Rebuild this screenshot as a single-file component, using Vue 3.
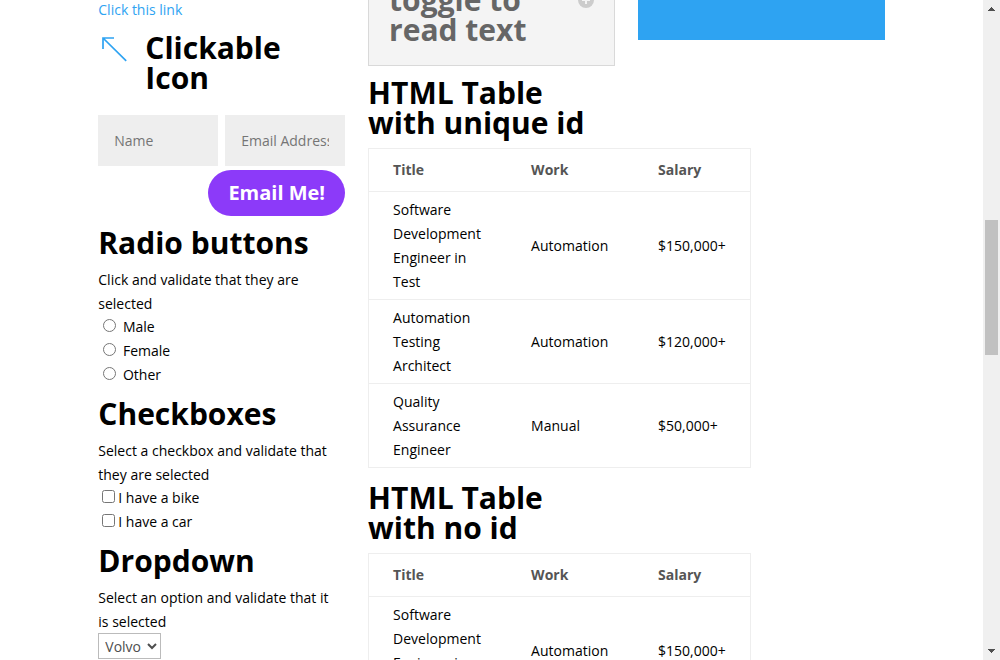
<script setup>
const genders = ['Male', 'Female', 'Other']
const vehicles = ['bike', 'car']
const cars = ['Volvo', 'Saab', 'Opel', 'Audi']
const jobs = [
  { title: 'Software Development Engineer in Test', work: 'Automation', salary: '$150,000+' },
  { title: 'Automation Testing Architect', work: 'Automation', salary: '$120,000+' },
  { title: 'Quality Assurance Engineer', work: 'Manual', salary: '$50,000+' },
]
const tables = ['HTML Table with unique id', 'HTML Table with no id']
</script>

<template>
  <div class="window">
    <main class="page">
      <div class="row">
        <section class="column column-forms">
          <a class="link" href="#">Click this link</a>
          <div class="blurb">
            <a class="blurb-icon" href="#" aria-label="Clickable Icon">
              <svg width="32" height="32" viewBox="0 0 32 32" fill="none" stroke="#2ea3f2">
                <path d="M5 16V5H16M5 5L28.200 27.800" stroke-width="1.700" />
              </svg>
            </a>
            <h4>Clickable Icon</h4>
          </div>
          <form class="contact" @submit.prevent>
            <div class="fields">
              <input type="text" placeholder="Name" aria-label="Name" />
              <input type="text" placeholder="Email Address" aria-label="Email Address" />
            </div>
            <button type="submit">Email Me!</button>
          </form>

          <div class="module">
            <h2>Radio buttons</h2>
            <p>Click and validate that they are selected</p>
            <div class="options">
              <div v-for="g in genders" :key="g">
                <label><input type="radio" name="gender" :value="g" /> {{ g }}</label>
              </div>
            </div>
          </div>

          <div class="module">
            <h2>Checkboxes</h2>
            <p>Select a checkbox and validate that they are selected</p>
            <div class="options">
              <div v-for="v in vehicles" :key="v">
                <label><input type="checkbox" name="vehicle" :value="v" />I have a {{ v }}</label>
              </div>
            </div>
          </div>

          <div class="module">
            <h2>Dropdown</h2>
            <p>Select an option and validate that it is selected</p>
            <div class="options">
              <select aria-label="Dropdown">
                <option v-for="c in cars" :key="c">{{ c }}</option>
              </select>
            </div>
          </div>
        </section>

        <section class="column column-tables">
          <div class="toggle">
            <h5>toggle to read text</h5>
            <svg class="toggle-icon" width="16" height="16" viewBox="0 0 16 16">
              <circle cx="8" cy="8" r="8" fill="#ccc" />
              <path d="M8 4V12M4 8H12" stroke="#f4f4f4" stroke-width="2" />
            </svg>
          </div>
          <div v-for="name in tables" :key="name" class="table-module">
            <h2>{{ name }}</h2>
            <table>
              <thead>
                <tr>
                  <th class="col-title">Title</th>
                  <th class="col-work">Work</th>
                  <th class="col-salary">Salary</th>
                </tr>
              </thead>
              <tbody>
                <tr v-for="job in jobs" :key="job.title">
                  <td>{{ job.title }}</td>
                  <td>{{ job.work }}</td>
                  <td>{{ job.salary }}</td>
                </tr>
              </tbody>
            </table>
          </div>
        </section>

        <section class="column">
          <div class="banner"></div>
        </section>
      </div>
    </main>

    <div class="scrollbar" aria-hidden="true">
      <svg width="17" height="17" viewBox="0 0 17 17" shape-rendering="crispEdges" fill="#505050">
        <path d="M8 7h1v1h1v1h1v1h1v1H5v-1h1V9h1V8h1z" />
      </svg>
      <div class="track">
        <div class="space-before"></div>
        <div class="thumb"></div>
        <div class="space-after"></div>
      </div>
      <svg width="17" height="17" viewBox="0 0 17 17" shape-rendering="crispEdges" fill="#505050">
        <path d="M5 6h7v1h-1v1h-1v1H9v1H8V9H7V8H6V7H5z" />
      </svg>
    </div>
  </div>
</template>

<style>
body {
  margin: 0;
  background: #fff;
}
</style>

<style scoped>
.window {
  display: flex;
  height: 100vh;
  overflow: hidden;
  font-family: "Open Sans", "Noto Sans", Arial, sans-serif;
  font-size: 14px;
  line-height: 24px;
  color: #000;
}
.window * {
  box-sizing: border-box;
}
.page {
  flex: 1;
  min-width: 0;
}
.row {
  display: grid;
  grid-template-columns: repeat(3, minmax(0, 1fr));
  gap: 23px;
  width: 80%;
  margin: 0 auto;
}
h2,
h4,
h5,
p {
  margin: 0;
}
h2,
h4,
h5 {
  font-size: 30px;
  line-height: 30px;
  font-weight: 700;
}
h2 {
  padding-bottom: 10px;
}
p {
  padding-right: 8px;
}
.column-forms {
  margin-top: -2px;
}
.link {
  display: block;
  color: #2ea3f2;
  text-decoration: none;
}
.blurb {
  display: flex;
  gap: 15px;
  margin-top: 11px;
}
.blurb-icon {
  flex: none;
  height: 32px;
}
.blurb-icon svg {
  display: block;
}
.contact {
  display: flex;
  flex-direction: column;
  align-items: flex-end;
  gap: 4px;
  margin-top: 22px;
}
.fields {
  display: flex;
  gap: 7px;
  width: 100%;
}
.fields input {
  flex: 1;
  min-width: 0;
  height: 51px;
  padding: 0 16px;
  border: 0;
  border-radius: 0;
  background: #eee;
  font: inherit;
  color: #999;
}
.fields input::placeholder {
  color: #757575;
}
.contact button {
  height: 46px;
  padding: 0 20px 2px;
  border: 0;
  border-radius: 23px;
  background: #8c3af9;
  color: #fff;
  font-family: inherit;
  font-size: 20px;
  font-weight: 700;
}
.module {
  margin-top: 12px;
}
.options {
  margin-top: -1px;
}
select {
  display: block;
  width: 63px;
  height: 26px;
  padding: 0 2px;
  border: 1px solid #bbb;
  border-radius: 0;
  background: #fff;
  color: #4e4e4e;
  font-family: inherit;
  font-size: 14px;
}
.toggle {
  position: relative;
  margin: -66px 0 12px;
  padding: 50px 70px 20px 20px;
  border: 1px solid #d9d9d9;
  background: #f4f4f4;
  color: #666;
}
.toggle-icon {
  position: absolute;
  top: 50%;
  right: 20px;
  margin-top: -8px;
}
table {
  width: 100%;
  margin-bottom: 15px;
  border: 1px solid #eee;
  border-collapse: separate;
  border-spacing: 0;
  text-align: left;
}
th {
  padding: 9px 24px;
  color: #555;
  font-weight: 700;
}
td {
  padding: 6px 24px 5px;
  border-top: 1px solid #eee;
}
.col-title {
  min-width: 138px;
}
.col-work {
  min-width: 127px;
}
.col-salary {
  min-width: 116px;
}
.banner {
  height: 40px;
  background: #2ea3f2;
}
.scrollbar {
  display: flex;
  flex-direction: column;
  flex: none;
  width: 17px;
  background: #f0f0f0;
}
.scrollbar svg {
  flex: none;
}
.track {
  display: flex;
  flex-direction: column;
  flex: 1;
  padding: 0 2px;
}
.space-before {
  flex: 203;
}
.thumb {
  flex: 135;
  background: #c1c1c1;
}
.space-after {
  flex: 288;
}
</style>
